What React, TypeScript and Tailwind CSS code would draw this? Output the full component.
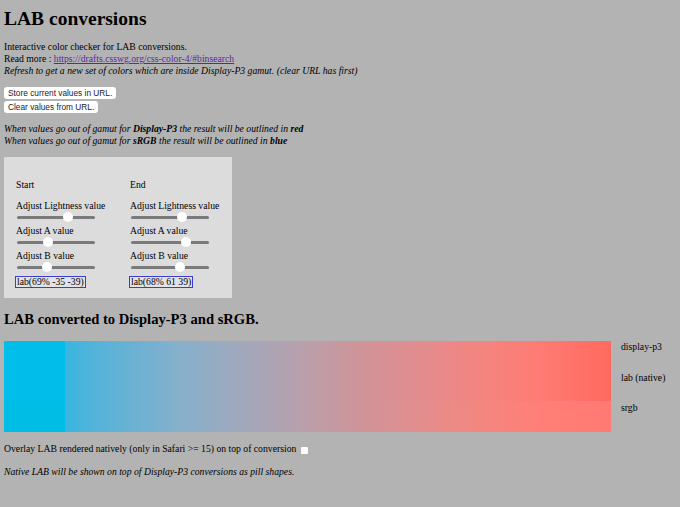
import React from 'react';

type Slider = { label: string; pos: number };

const startSliders: Slider[] = [
  { label: 'Adjust Lightness value', pos: 0.67 },
  { label: 'Adjust A value', pos: 0.38 },
  { label: 'Adjust B value', pos: 0.37 },
];

const endSliders: Slider[] = [
  { label: 'Adjust Lightness value', pos: 0.67 },
  { label: 'Adjust A value', pos: 0.73 },
  { label: 'Adjust B value', pos: 0.64 },
];

function Range({ pos }: { pos: number }) {
  return (
    <div className="relative h-[10px] w-[78px] ml-[1px] flex items-center">
      <div className="h-[3px] w-full rounded-full bg-[#7a7a7a]" />
      <div
        className="absolute top-[0px] h-[10px] w-[10px] rounded-full bg-white"
        style={{ left: `${pos * 68}px` }}
      />
    </div>
  );
}

function Column({ title, sliders, value }: { title: string; sliders: Slider[]; value: string }) {
  return (
    <div className="w-[114px] shrink-0 flex flex-col">
      <div className="leading-[12px]">{title}</div>
      {sliders.map((s, i) => (
        <div key={i} className={i === 0 ? 'mt-[9px]' : 'mt-[3px]'}>
          <div className="leading-[12px] whitespace-nowrap">{s.label}</div>
          <Range pos={s.pos} />
        </div>
      ))}
      <div className="mt-[4px] self-start -ml-[1px] border border-[#3d3dcc] bg-[#e2e2ea] px-[1px] leading-[10px] h-[12px] whitespace-nowrap text-[9.7px]">
        {value}
      </div>
    </div>
  );
}

export default function App() {
  return (
    <div
      className="min-h-[507px] bg-[#b3b3b3] text-black px-[4px] pt-[6px] text-[9.7px]"
      style={{ fontFamily: '"Liberation Serif", "Times New Roman", serif' }}
    >
      <h1 className="text-[19.5px] font-bold leading-[25px]">LAB conversions</h1>

      <div className="mt-[10px] leading-[12px]">
        <div>Interactive color checker for LAB conversions.</div>
        <div>
          Read more :{' '}
          <a href="#" className="text-[#5b2a9a] underline">
            https://drafts.csswg.org/css-color-4/#binsearch
          </a>
        </div>
        <div className="italic">
          Refresh to get a new set of colors which are inside Display-P3 gamut. (clear URL has first)
        </div>
      </div>

      <div
        className="mt-[10px] flex flex-col items-start gap-[2px] text-[8.3px]"
        style={{ fontFamily: '"Liberation Sans", Arial, sans-serif' }}
      >
        <button className="bg-white rounded-[3px] px-[4px] h-[12px] leading-[12px] text-[#222]">
          Store current values in URL.
        </button>
        <button className="bg-white rounded-[3px] px-[4px] h-[12px] leading-[12px] text-[#222]">
          Clear values from URL.
        </button>
      </div>

      <div className="mt-[10px] italic leading-[12px]">
        <div>
          When values go out of gamut for <b>Display-P3</b> the result will be outlined in <b>red</b>
        </div>
        <div>
          When values go out of gamut for <b>sRGB</b> the result will be outlined in <b>blue</b>
        </div>
      </div>

      <div className="mt-[10px] w-[228px] h-[141px] bg-[#dcdcdc] pt-[22px] pl-[12px] flex">
        <Column title="Start" sliders={startSliders} value="lab(69% -35 -39)" />
        <Column title="End" sliders={endSliders} value="lab(68% 61 39)" />
      </div>

      <h2 className="mt-[12px] text-[14.6px] font-bold leading-[19px]">LAB converted to Display-P3 and sRGB.</h2>

      <div className="mt-[12px] flex">
        <div className="w-[607px] flex flex-col">
          <div className="flex h-[60px]">
            <div className="w-[61px] bg-[#00bde9]" />
            <div className="flex-1 bg-[linear-gradient(to_right,#38b6e0_0%,#56b3d9_6%,#86b0cc_21%,#a0a8bc_32%,#b8a0ac_43%,#cf9499_54%,#e38c8e_65%,#f3857f_76%,#ff7b73_87%,#ff6a60_100%)]" />
          </div>
          <div className="flex h-[31px]">
            <div className="w-[61px] bg-[#00bde6]" />
            <div className="flex-1 bg-[linear-gradient(to_right,#38b6e0_0%,#56b3d9_6%,#86b0cc_21%,#a0a8bc_32%,#b8a0ac_43%,#cf9499_54%,#e38d8e_65%,#f38780_76%,#ff7f77_87%,#ff7a72_100%)]" />
          </div>
        </div>
        <div className="ml-[10px] flex flex-col text-[9.7px] leading-[12px]">
          <div className="h-[30px]">display-p3</div>
          <div className="h-[30px] pt-[1px]">lab (native)</div>
          <div className="pt-[1px]">srgb</div>
        </div>
      </div>

      <div className="mt-[11px] leading-[12px] flex items-center">
        <span>Overlay LAB rendered natively (only in Safari &gt;= 15) on top of conversion</span>
        <span className="ml-[5px] mt-[3px] inline-block h-[7px] w-[7px] bg-white rounded-[1px]" />
      </div>

      <div className="mt-[11px] italic leading-[12px]">
        Native LAB will be shown on top of Display-P3 conversions as pill shapes.
      </div>
    </div>
  );
}
